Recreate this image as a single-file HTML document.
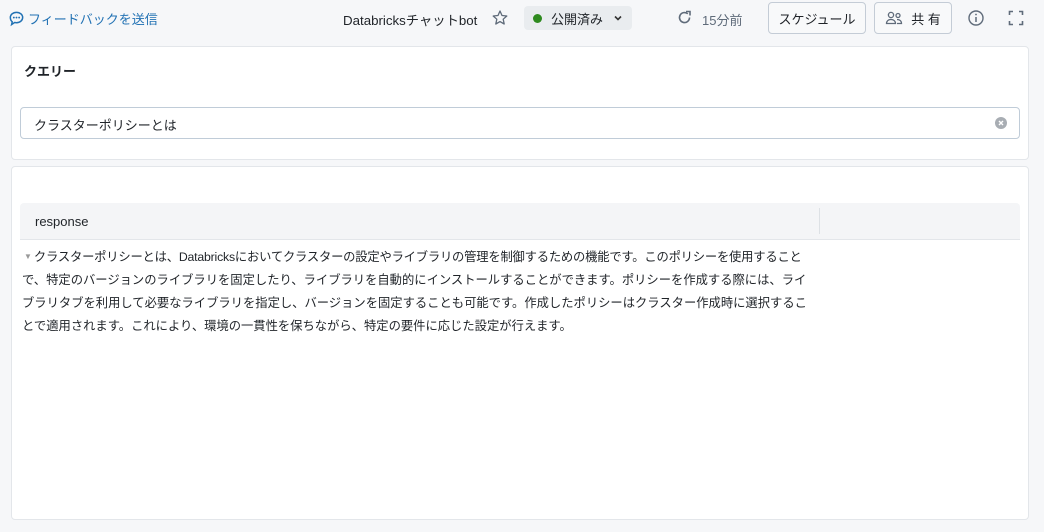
<!DOCTYPE html>
<html><head><meta charset="utf-8"><style>
*{box-sizing:border-box;margin:0;padding:0}
body{width:1044px;height:532px;background:#f6f7f9;font-family:"Liberation Sans","Noto Sans CJK JP",sans-serif;color:#1f2328;position:relative;overflow:hidden;font-size:13px}
.abs{position:absolute}
.card{position:absolute;background:#fff;border:1px solid #e3e6ea;border-radius:4px}
.btn{position:absolute;border:1px solid #c4ccd6;border-radius:4px;background:#f8f9fa;font-size:13px;display:flex;align-items:center;justify-content:center}
</style></head><body>
<div class="abs" style="left:8px;top:9px;color:#2272b4;font-size:13px;display:flex;align-items:center;gap:3px">
<svg width="17" height="17" viewBox="0 0 16 16"><path d="M8 2.2c3.3 0 5.8 2.2 5.8 4.9S11.3 12 8 12c-.6 0-1.2-.1-1.8-.2L3.4 13.7l.6-2.6C2.8 10.2 2.2 8.8 2.2 7.1 2.2 4.4 4.7 2.2 8 2.2z" fill="none" stroke="#2272b4" stroke-width="1.4"/><circle cx="5.5" cy="7.1" r=".9" fill="#2272b4"/><circle cx="8" cy="7.1" r=".9" fill="#2272b4"/><circle cx="10.5" cy="7.1" r=".9" fill="#2272b4"/></svg>フィードバックを送信</div>
<div class="abs" style="left:343px;top:10px;font-size:13.3px">Databricksチャットbot</div>
<svg class="abs" style="left:491px;top:9px" width="18" height="18" viewBox="0 0 18 18"><path d="M9 2l2 4.5 4.8.5-3.6 3.2 1 4.8L9 12.6 4.8 15l1-4.8L2.2 7l4.8-.5z" fill="none" stroke="#5f6b7a" stroke-width="1.3" stroke-linejoin="round"/></svg>
<div class="abs" style="left:524px;top:6px;width:108px;height:24px;background:#e9ecef;border-radius:4px;display:flex;align-items:center;padding-left:9px;font-size:13px"><span style="width:9px;height:9px;border-radius:50%;background:#2e8a1f;margin-right:9px"></span>公開済み<svg style="margin-left:10px" width="10" height="8" viewBox="0 0 10 8"><path d="M2 2.5l3 3 3-3" fill="none" stroke="#333" stroke-width="1.6"/></svg></div>
<svg class="abs" style="left:676px;top:9px" width="17" height="17" viewBox="0 0 17 17"><path d="M13.5 8.5A5 5 0 1 1 11.8 4.8" fill="none" stroke="#5f6b7a" stroke-width="1.6"/><path d="M10 2.5h4v4" fill="none" stroke="#5f6b7a" stroke-width="1.6"/></svg>
<div class="abs" style="left:702px;top:10px;color:#5f6b7a;font-size:13px">15分前</div>
<div class="btn" style="left:768px;top:2px;width:98px;height:32px">スケジュール</div>
<div class="btn" style="left:874px;top:2px;width:78px;height:32px;gap:8px"><svg width="18" height="14" viewBox="0 0 18 14"><circle cx="6" cy="4" r="2.6" fill="none" stroke="#5f6b7a" stroke-width="1.3"/><circle cx="13" cy="4.5" r="2" fill="none" stroke="#5f6b7a" stroke-width="1.3"/><path d="M1.5 12.5c0-2.5 2-4 4.5-4s4.5 1.5 4.5 4zM12 8.5c2.5 0 4.5 1.2 4.5 4H12" fill="none" stroke="#5f6b7a" stroke-width="1.3"/></svg><span>共 有</span></div>
<svg class="abs" style="left:967px;top:9px" width="18" height="18" viewBox="0 0 18 18"><circle cx="9" cy="9" r="7" fill="none" stroke="#5f6b7a" stroke-width="1.4"/><path d="M9 8v5" stroke="#5f6b7a" stroke-width="1.5"/><circle cx="9" cy="5.5" r=".9" fill="#5f6b7a"/></svg>
<svg class="abs" style="left:1008px;top:10px" width="16" height="16" viewBox="0 0 16 16"><path d="M1.5 5V1.5H5M11 1.5h3.5V5M14.5 11v3.5H11M5 14.5H1.5V11" fill="none" stroke="#5f6b7a" stroke-width="1.6"/></svg>

<div class="card" style="left:11px;top:46px;width:1018px;height:114px">
<div class="abs" style="left:12px;top:14px;font-weight:bold;font-size:13px">クエリー</div>
<div class="abs" style="left:8px;top:60px;width:1000px;height:32px;border:1px solid #c0ccd8;border-radius:4px;padding:7px 0 0 13px;font-size:13px">クラスターポリシーとは
<svg class="abs" style="right:12px;top:9px" width="12" height="12" viewBox="0 0 12 12"><circle cx="6" cy="6" r="6" fill="#a8adb3"/><path d="M4 4l4 4M8 4l-4 4" stroke="#fff" stroke-width="1.4"/></svg></div>
</div>

<div class="card" style="left:11px;top:166px;width:1018px;height:354px">
<div class="abs" style="left:8px;top:36px;width:1000px;height:37px;background:#f4f5f7;border-bottom:1px solid #e3e6ea;border-radius:4px 4px 0 0">
<div class="abs" style="left:15px;top:11px;font-size:13px">response</div>
<div class="abs" style="left:799px;top:5px;width:1px;height:26px;background:#dde1e5"></div>
</div>
<div class="abs" style="left:10px;top:78px;font-size:12.3px;line-height:23px;color:#1f2328;white-space:nowrap"><span style="color:#999;font-size:8px;vertical-align:2px;margin:0 2px 0 2px">▼</span><span style="letter-spacing:-0.2px">クラスターポリシーとは、Databricksにおいてクラスターの設定やライブラリの管理を制御するための機能です。このポリシーを使用すること</span><br>で、特定のバージョンのライブラリを固定したり、ライブラリを自動的にインストールすることができます。ポリシーを作成する際には、ライ<br>ブラリタブを利用して必要なライブラリを指定し、バージョンを固定することも可能です。作成したポリシーはクラスター作成時に選択するこ<br>とで適用されます。これにより、環境の一貫性を保ちながら、特定の要件に応じた設定が行えます。</div>
</div>
</body></html>
